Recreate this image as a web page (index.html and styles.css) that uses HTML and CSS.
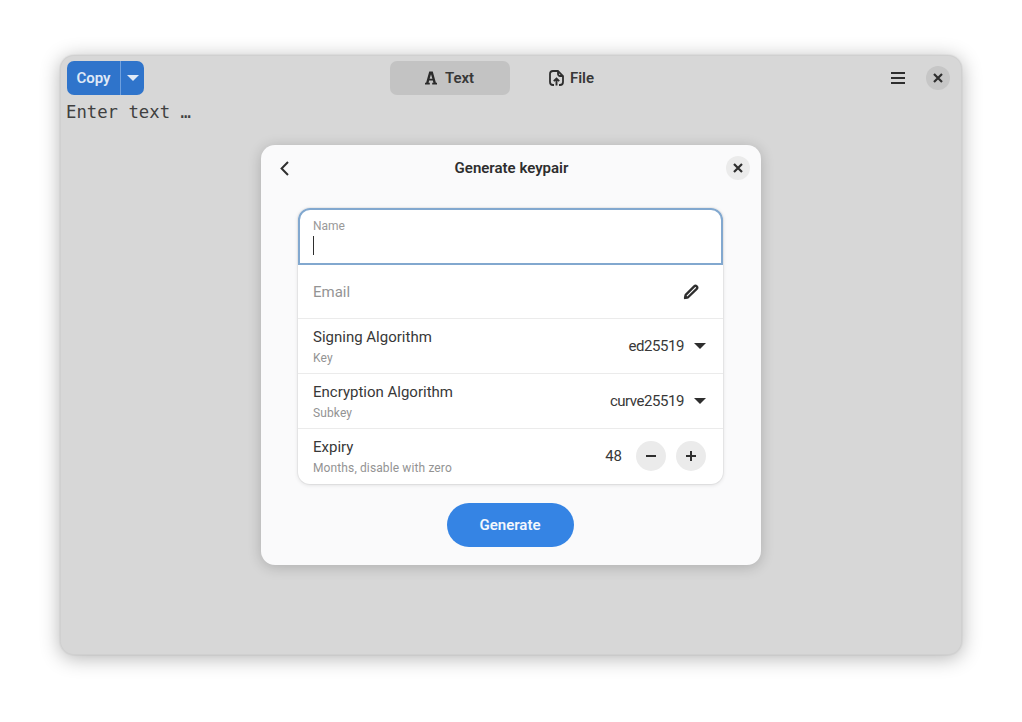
FILE: index.html
```html
<!DOCTYPE html>
<html lang="en">
<head>
<meta charset="utf-8">
<title>Generate keypair</title>
<link rel="stylesheet" href="styles.css">
</head>
<body>
<div class="window">
  <header class="topbar">
    <div class="split">
      <span class="split-label">Copy</span>
      <span class="split-arrow"><svg width="12" height="6" viewBox="0 0 12 6"><path d="M0 0h12L6 6z" fill="#fff" fill-opacity=".85"/></svg></span>
    </div>
    <nav class="tabs">
      <div class="tab tab-on">
        <svg width="12" height="14" viewBox="0 0 13 14"><path d="M4.6 0h3.8L11.8 12.2H13V14H7.8v-1.8h1.3l-.6-2.5H4.5l-.6 2.5h1.3V14H0v-1.8h1.2zM5 7.8h3L6.5 2.9z" fill="#2a2a2a"/></svg>
        <span>Text</span>
      </div>
      <div class="tab tab-file">
        <svg width="15" height="16" viewBox="0 0 15 16"><path d="M9 1H4a3 3 0 0 0-3 3v8a3 3 0 0 0 3 3h1M10 15h1a3 3 0 0 0 3-3V6L9 1v3a2 2 0 0 0 2 2h3" fill="none" stroke="#2e2e2e" stroke-width="1.8"/><path d="M7.5 15.5V9M4.8 11.2l2.7-2.7 2.7 2.7" fill="none" stroke="#2e2e2e" stroke-width="1.9"/></svg>
        <span>File</span>
      </div>
    </nav>
    <div class="end">
      <svg class="menu-icon" width="14" height="12" viewBox="0 0 14 12"><path d="M0 0h14v2H0zM0 5h14v2H0zM0 10h14v2H0z" fill="#2e2e2e"/></svg>
      <span class="round round-dim"><svg width="10" height="10" viewBox="0 0 10 10"><path d="M1 1l8 8M9 1L1 9" stroke="#2e2e2e" stroke-width="2.2"/></svg></span>
    </div>
  </header>
  <div class="editor">Enter text …</div>

  <section class="dialog">
    <div class="dialog-head">
      <svg class="back" width="9" height="15" viewBox="0 0 9 15"><path d="M8 1L1.6 7.5 8 14" fill="none" stroke="#2e2e2e" stroke-width="2"/></svg>
      <h1 class="dialog-title">Generate keypair</h1>
      <span class="round round-light"><svg width="10" height="10" viewBox="0 0 10 10"><path d="M1 1l8 8M9 1L1 9" stroke="#2e2e2e" stroke-width="2.2"/></svg></span>
    </div>
    <div class="list">
      <div class="row row-name">
        <span class="float-label">Name</span>
        <span class="caret"></span>
      </div>
      <div class="row row-email">
        <span class="placeholder">Email</span>
        <svg width="16" height="16" viewBox="0 0 16 16"><path d="M2 14l.7-3.1L11.2 2.4a1.8 1.8 0 0 1 2.5 0l0 0a1.8 1.8 0 0 1 0 2.5L5.1 13.3z" fill="none" stroke="#2e2e2e" stroke-width="2.3" stroke-linejoin="round"/><path d="M1 15l1-4.4 3.4 3.4z" fill="#2e2e2e"/></svg>
      </div>
      <div class="row">
        <div class="titles"><span class="title">Signing Algorithm</span><span class="subtitle">Key</span></div>
        <div class="value"><span class="value-text">ed25519</span><svg class="drop" width="12" height="6" viewBox="0 0 12 6"><path d="M0 0h12L6 6z" fill="#2e2e2e"/></svg></div>
      </div>
      <div class="row">
        <div class="titles"><span class="title">Encryption Algorithm</span><span class="subtitle">Subkey</span></div>
        <div class="value"><span class="value-text">curve25519</span><svg class="drop" width="12" height="6" viewBox="0 0 12 6"><path d="M0 0h12L6 6z" fill="#2e2e2e"/></svg></div>
      </div>
      <div class="row row-last">
        <div class="titles"><span class="title">Expiry</span><span class="subtitle">Months, disable with zero</span></div>
        <div class="value value-spin">
          <span class="spin-num">48</span>
          <span class="round round-spin"><svg width="10" height="10" viewBox="0 0 10 10"><path d="M0 5h10" stroke="#2e2e2e" stroke-width="2"/></svg></span>
          <span class="round round-spin"><svg width="10" height="10" viewBox="0 0 10 10"><path d="M0 5h10M5 0v10" stroke="#2e2e2e" stroke-width="2"/></svg></span>
        </div>
      </div>
    </div>
    <button class="generate" type="button">Generate</button>
  </section>
</div>
</body>
</html>
```
FILE: styles.css
```css
* { box-sizing: border-box; }
html, body { margin: 0; height: 100%; background: #fff; }
body {
  width: 1022px;
  height: 722px;
  overflow: hidden;
  padding: 55px 60px 67px;
  font-family: Roboto, sans-serif;
  color: #2e2e2e;
}
.window {
  position: relative;
  width: 902px;
  height: 600px;
  background: #d7d7d7;
  border-radius: 14px;
  box-shadow: inset 0 0 0 1px rgba(0,0,0,.03), 0 0 0 1px rgba(0,0,0,.03), 0 3px 20px rgba(0,0,0,.3);
}
.topbar {
  display: grid;
  grid-template-columns: 1fr auto 1fr;
  align-items: center;
  padding: 6px 12px 0 7px;
  height: 40px;
}
.split {
  display: flex;
  width: 77px;
  height: 34px;
  justify-self: start;
  border-radius: 7px;
  background: #2f74cb;
  color: #dfe9f7;
  font-size: 15px;
  font-weight: 600;
}
.split-label {
  width: 54px;
  display: flex;
  align-items: center;
  justify-content: center;
  border-right: 1px solid #6fa0de;
}
.split-arrow { flex: 1; display: flex; align-items: center; justify-content: center; }
.tabs { display: flex; margin-left: 2px; }
.tab {
  width: 120px;
  height: 34px;
  border-radius: 7px;
  display: flex;
  align-items: center;
  justify-content: center;
  gap: 8px;
  font-size: 15px;
  font-weight: 600;
  color: #383838;
}
.tab-on { background: #c3c3c3; }
.tab-file { gap: 6px; padding-left: 4px; }
.end { display: flex; align-items: center; justify-content: flex-end; gap: 21px; }
.round {
  border-radius: 50%;
  display: flex;
  align-items: center;
  justify-content: center;
  flex: none;
}
.round-dim { width: 24px; height: 24px; background: #c6c6c6; }
.round-light { width: 24px; height: 24px; background: #ebebeb; }
.editor {
  padding: 0 0 0 6px;
  margin-top: 5px;
  font-family: "DejaVu Sans Mono", monospace;
  font-size: 17.3px;
  line-height: 24px;
  color: #404040;
}
.dialog {
  position: absolute;
  left: 201px;
  top: 90px;
  width: 500px;
  height: 420px;
  background: #fafafb;
  border-radius: 14px;
  box-shadow: 0 2px 14px rgba(0,0,0,.2);
  display: flex;
  flex-direction: column;
  align-items: center;
}
.dialog-head {
  width: 100%;
  height: 46px;
  padding: 0 11px 0 19px;
  display: flex;
  align-items: center;
  justify-content: space-between;
}
.dialog-title { margin: 0 0 0 8px; font-size: 15px; font-weight: 600; color: #2e2e2e; }
.list {
  width: 425px;
  height: 276px;
  margin: 17px 1px 0 0;
  background: #fff;
  border-radius: 12px;
  box-shadow: 0 0 0 1px rgba(0,0,0,.04), 0 1px 4px rgba(0,0,0,.12);
  display: flex;
  flex-direction: column;
}
.row {
  height: 55px;
  padding: 0 17px 0 15px;
  display: flex;
  align-items: center;
  justify-content: space-between;
  border-bottom: 1px solid #ebebeb;
}
.row-last { border-bottom: 0; }
.row-name {
  height: 57px;
  flex-direction: column;
  align-items: flex-start;
  justify-content: flex-start;
  padding: 8px 13px 0 13px;
  border: 2px solid #82a8cf;
  border-radius: 12px 12px 0 0;
}
.float-label { font-size: 12px; line-height: 16px; color: #999; }
.caret { width: 1px; height: 19px; margin-top: 2px; background: #2e2e2e; }
.row-email { height: 54px; padding-right: 24px; }
.placeholder { font-size: 15px; color: #949494; }
.titles { display: flex; flex-direction: column; padding-top: 1px; }
.title { font-size: 15px; line-height: 20px; color: #383838; }
.subtitle { font-size: 12px; line-height: 16px; margin-top: 3px; letter-spacing: .12px; color: #939393; }
.row-last .titles { padding-top: 0; }
.value { display: flex; align-items: center; gap: 10px; font-size: 15px; color: #383838; }
.value-text { letter-spacing: -.45px; }
.value-spin { margin-top: -1px; }
.spin-num { margin-right: 4px; }
.round-spin { width: 30px; height: 30px; background: #ebebeb; }
.generate {
  width: 127px;
  height: 44px;
  margin: 19px 2px 0 0;
  border: 0;
  border-radius: 22px;
  background: #3584e4;
  color: #f2f7fd;
  font-family: Roboto, sans-serif;
  font-size: 15px;
  font-weight: 600;
}
```
